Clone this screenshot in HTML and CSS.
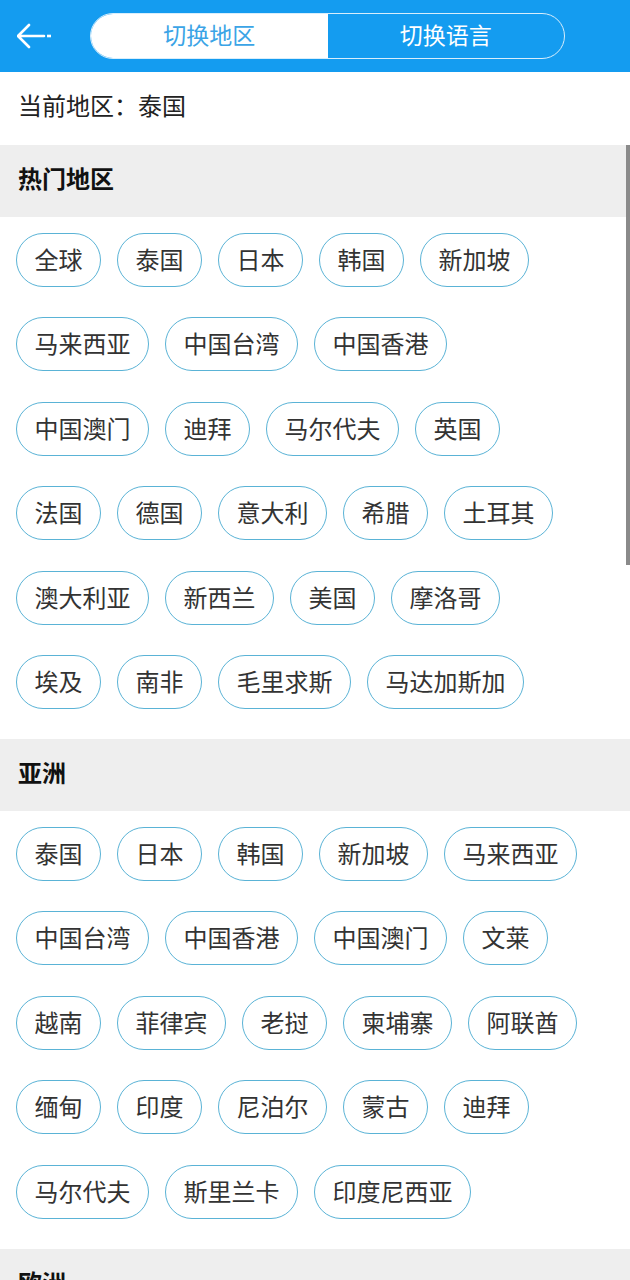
FILE: index.html
```html
<!DOCTYPE html>
<html lang="zh-CN">
<head>
    <meta charset="UTF-8">
    <meta name="viewport" content="width=device-width, initial-scale=1.0">
    <title>切换地区</title>
    <link rel="stylesheet" href="styles.css">
</head>
<body>
    <div class="topbar">
        <button class="back" onclick="history.back()">
            <svg width="36" height="26" viewBox="0 0 36 26">
                <path d="M12 2 L1 13 L12 24 M1 13 H27" fill="none" stroke="#fff" stroke-width="2.6" stroke-linecap="round" stroke-linejoin="round"/>
                <rect x="30" y="11.7" width="4" height="2.6" fill="#fff"/>
            </svg>
        </button>
        <div class="tabs">
            <div class="tab active">切换地区</div>
            <div class="tab">切换语言</div>
        </div>
    </div>

    <div class="current">当前地区：泰国</div>

    <div class="list">
        <div class="scroll-thumb"></div>

        <div class="group-title">热门地区</div>
        <div class="chips">
            <span class="chip">全球</span>
            <span class="chip">泰国</span>
            <span class="chip">日本</span>
            <span class="chip">韩国</span>
            <span class="chip">新加坡</span>
            <span class="chip">马来西亚</span>
            <span class="chip">中国台湾</span>
            <span class="chip">中国香港</span>
            <span class="chip">中国澳门</span>
            <span class="chip">迪拜</span>
            <span class="chip">马尔代夫</span>
            <span class="chip">英国</span>
            <span class="chip">法国</span>
            <span class="chip">德国</span>
            <span class="chip">意大利</span>
            <span class="chip">希腊</span>
            <span class="chip">土耳其</span>
            <span class="chip">澳大利亚</span>
            <span class="chip">新西兰</span>
            <span class="chip">美国</span>
            <span class="chip">摩洛哥</span>
            <span class="chip">埃及</span>
            <span class="chip">南非</span>
            <span class="chip">毛里求斯</span>
            <span class="chip">马达加斯加</span>
        </div>

        <div class="group-title">亚洲</div>
        <div class="chips">
            <span class="chip">泰国</span>
            <span class="chip">日本</span>
            <span class="chip">韩国</span>
            <span class="chip">新加坡</span>
            <span class="chip">马来西亚</span>
            <span class="chip">中国台湾</span>
            <span class="chip">中国香港</span>
            <span class="chip">中国澳门</span>
            <span class="chip">文莱</span>
            <span class="chip">越南</span>
            <span class="chip">菲律宾</span>
            <span class="chip">老挝</span>
            <span class="chip">柬埔寨</span>
            <span class="chip">阿联酋</span>
            <span class="chip">缅甸</span>
            <span class="chip">印度</span>
            <span class="chip">尼泊尔</span>
            <span class="chip">蒙古</span>
            <span class="chip">迪拜</span>
            <span class="chip">马尔代夫</span>
            <span class="chip">斯里兰卡</span>
            <span class="chip">印度尼西亚</span>
        </div>

        <div class="group-title">欧洲</div>
        <div class="chips">
            <span class="chip">英国</span>
            <span class="chip">法国</span>
            <span class="chip">德国</span>
            <span class="chip">意大利</span>
        </div>
    </div>
</body>
</html>
```

FILE: styles.css
```css
body {
    margin: 0;
    font-family: "Noto Sans CJK SC", "Noto Sans", sans-serif;
    background: #fff;
    color: #222;
}
.topbar {
    height: 72px;
    background: #149cf0;
    display: flex;
    align-items: center;
}
.back {
    width: 90px;
    height: 72px;
    padding: 0 0 0 17px;
    background: none;
    border: none;
    display: flex;
    align-items: center;
    cursor: pointer;
}
.tabs {
    width: 475px;
    height: 46px;
    box-sizing: border-box;
    border: 1px solid #d8eefc;
    border-radius: 23px;
    overflow: hidden;
    display: flex;
}
.tab {
    flex: 1;
    text-align: center;
    line-height: 40px;
    font-size: 23px;
    color: #fff;
}
.tab.active {
    background: #fff;
    color: #3ba4e6;
}
.current {
    height: 73px;
    line-height: 66px;
    padding-left: 18px;
    font-size: 24px;
    color: #222;
}
.list {
    position: relative;
}
.scroll-thumb {
    position: absolute;
    top: 0;
    right: 0;
    width: 4px;
    height: 420px;
    background: #8a8a8a;
}
.group-title {
    height: 72px;
    line-height: 66px;
    background: #eeeeee;
    padding-left: 18px;
    font-size: 24px;
    font-weight: bold;
    color: #111;
}
.chips {
    display: flex;
    flex-wrap: wrap;
    column-gap: 16px;
    row-gap: 30.4px;
    padding: 16px 35px 30px 16px;
}
.chip {
    height: 54px;
    box-sizing: border-box;
    line-height: 50px;
    padding: 0 17.5px;
    border: 1px solid #5ab3d6;
    border-radius: 27px;
    font-size: 24px;
    color: #333;
}
```
